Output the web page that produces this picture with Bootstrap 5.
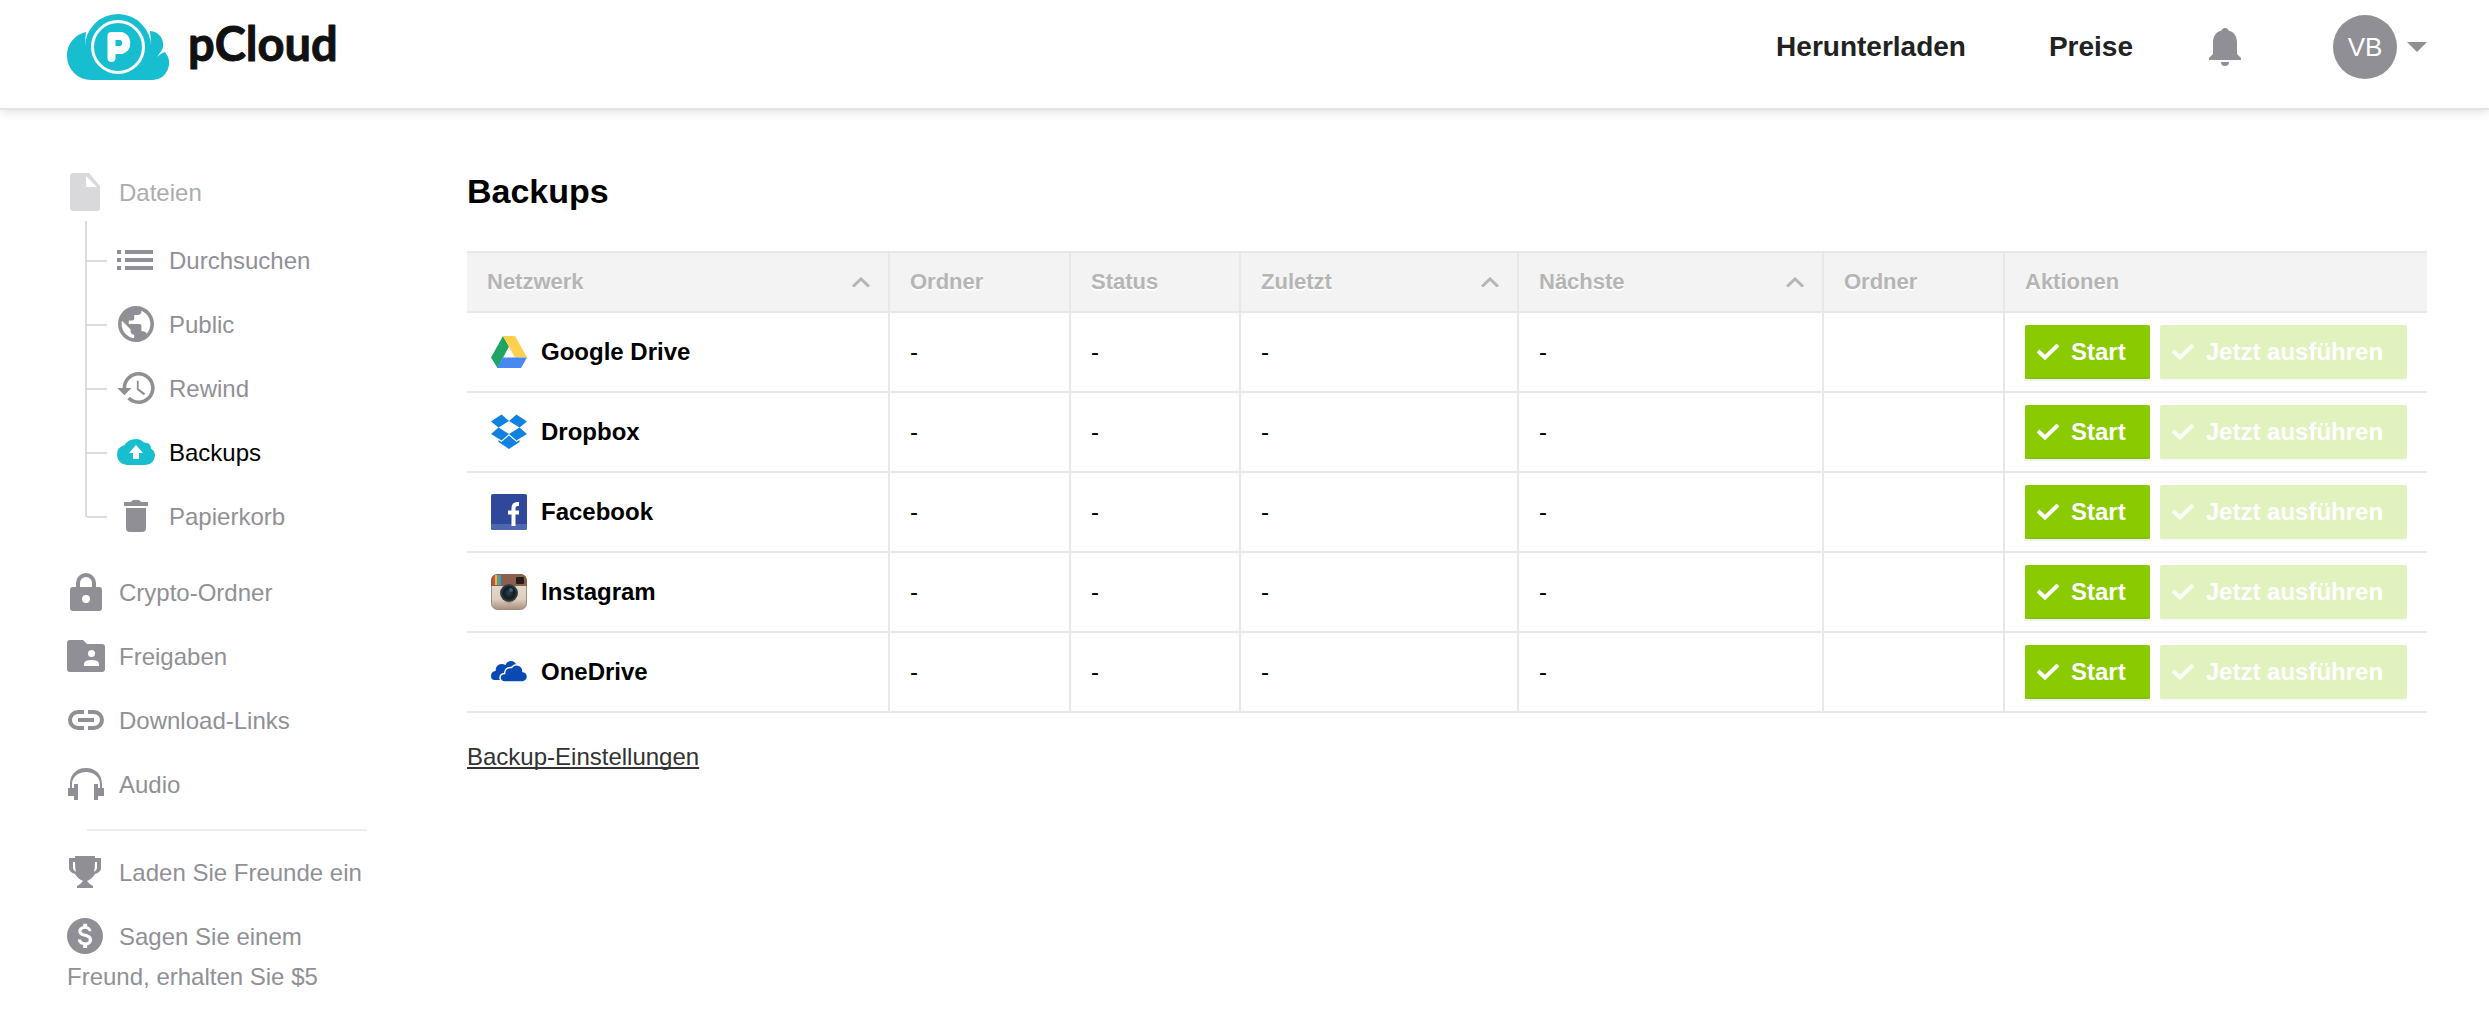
<!DOCTYPE html>
<html lang="de">
<head>
<meta charset="utf-8">
<meta name="viewport" content="width=device-width, initial-scale=1">
<title>pCloud – Backups</title>
<link href="https://cdn.jsdelivr.net/npm/bootstrap@5.3.0/dist/css/bootstrap.min.css" rel="stylesheet">
<style>
  body { font: 24px/40px "Liberation Sans", Arial, sans-serif; color: #000; background: #fff; }
  a { color: inherit; text-decoration: none; }
  svg { overflow: visible; flex: none; }

  /* top bar */
  .topbar { padding: 15px 62px 29px 67px; border-bottom: 2px solid #e4e4e4; box-shadow: 0 2px 10px rgba(0,0,0,.12); }
  .toplink { font-size: 28px; font-weight: 700; color: #222; }
  .toplink + .toplink { margin-left: 83px; }
  .iconbtn { border: 0; padding: 0; background: none; color: #8f8f95; }
  .bell { margin: 0 92px 0 76px; }
  .avatar { width: 64px; height: 64px; border-radius: 50%; background: #8f8f95; color: #fff; font-size: 26px; }
  .wordmark { font-family: Lato, sans-serif; font-size: 47px; font-weight: 700; fill: #111; stroke: #111; stroke-width: 1; stroke-linejoin: round; }

  /* side navigation */
  .sidebar { width: 300px; margin: 51px 100px 0 67px; color: #909096; }
  .navitem { display: block; padding: 12px 0; }
  .navitem svg { vertical-align: -11px; margin-right: 14px; fill: #8f8f95; }
  .navhead { padding-bottom: 8px; color: #acacb0; }
  .navhead svg { fill: #d9d9db; }
  .tree { position: relative; margin: 0 0 12px 20px; padding-top: 8px; }
  .tree::before { content: ""; position: absolute; left: -2px; top: 0; bottom: 32px; border-left: 2px solid #dcdcde; }
  .tree li::before { content: ""; width: 20px; height: 2px; margin-right: 10px; background: #dcdcde; }
  .tree .active { color: #000; }
  .tree .active svg { fill: #17bed0; }
  .sidebar hr { margin: 12px 0 10px 20px; border-top: 2px solid #eee; opacity: 1; }

  /* backups */
  .content { padding: 61px 62px 0 0; }
  .content h1 { font-size: 34px; line-height: 40px; font-weight: 700; margin-bottom: 40px; }
  .backups { table-layout: fixed; border-collapse: separate; border-spacing: 0; margin: 0; min-width: 1700px; }
  .backups > :not(caption) > * > * { padding: 0 18px 0 20px; border: 0 solid #e8e8e8; border-width: 0 2px 2px 0; box-shadow: none; vertical-align: middle; color: #000; }
  .backups > :not(caption) > * > :last-child { border-right-width: 0; }
  .backups > thead > tr > th { height: 62px; border-top-width: 2px; background: #f3f3f3; color: #b5b5b5; font-size: 22px; text-shadow: 0 2px 0 #fff; }
  .backups > tbody > tr > * { height: 80px; }
  .sortbtn { font-weight: 700; color: inherit; text-shadow: inherit; }
  .service { padding-left: 4px; gap: 14px; }
  .actions { gap: 10px; }
  .runbtn { padding: 7px 24px 7px 12px; border: 0; border-radius: 2px; font-size: 24px; line-height: 40px; font-weight: 700; color: #fff; background: #89cb00; box-shadow: inset 0 -2px #82c200, 0 2px #f0f0f0; }
  .runbtn:hover { background: #7fbd00; color: #fff; }
  .runbtn:disabled { opacity: 1; color: #fff; background: #e2f2bf; box-shadow: 0 2px #f9f9f9; }
  .runbtn svg { margin-right: 12px; fill: none; stroke: #fff; stroke-width: 4; }
  .runbtn:disabled svg { opacity: .85; }
  .settings { color: #333; text-decoration: underline; text-decoration-thickness: 2px; text-underline-offset: 2px; text-decoration-skip-ink: none; }
</style>
<script src="https://cdn.jsdelivr.net/npm/bootstrap@5.3.0/dist/js/bootstrap.bundle.min.js"></script>
</head>
<body>

<svg class="d-none" aria-hidden="true">
  <symbol id="tick" viewBox="0 0 22 16"><path d="M1 7l7 6.500L21 1"/></symbol>
  <symbol id="up" viewBox="0 0 18 10"><path d="M1 9.500l8-7.500 8 7.500" fill="none" stroke="#b5b5b5" stroke-width="3"/></symbol>
</svg>

<header class="topbar d-flex align-items-center">
  <a href="#" class="me-auto d-flex" aria-label="pCloud">
    <svg width="272" height="64" viewBox="0 1 272 64">
      <path fill="#17bed0" d="M24 66A24 24 0 0 1 0 42A24 24 0 0 1 19 18Q18 24 18.500 31L51 50L83.500 31Q84 24 83 17A13.500 13.500 0 0 1 95 36L90 43Q94 39 98 38A17 17 0 0 1 86 66Z"/>
      <circle cx="51" cy="33" r="33" fill="#17bed0"/>
      <circle cx="51" cy="33" r="25.500" fill="none" stroke="#fff" stroke-width="3"/>
      <path d="M44.500 44V22H54.500a7.500 7.500 0 0 1 0 14H46" fill="none" stroke="#fff" stroke-width="8" stroke-linecap="round" stroke-linejoin="round"/>
      <text class="wordmark" x="121" y="47">pCloud</text>
    </svg>
  </a>
  <a href="#" class="toplink">Herunterladen</a>
  <a href="#" class="toplink">Preise</a>
  <button type="button" class="iconbtn bell d-flex" aria-label="Benachrichtigungen">
    <svg width="32" height="38" viewBox="0 0 32 38" fill="currentColor"><path d="M0 32v-2l4-4V15C4 8 7 4 12.500 2.500Q13 0 16 0T19.500 2.500C25 4 28 8 28 15v11l4 4v2zM12 34h8a4 4 0 0 1-8 0z"/></svg>
  </button>
  <button type="button" class="iconbtn d-flex align-items-center" aria-label="Konto">
    <span class="avatar d-flex align-items-center justify-content-center">VB</span>
    <svg class="ms-2" width="22" height="10" viewBox="0 0 22 10" fill="currentColor"><path d="M2 0h20L12 10z"/></svg>
  </button>
</header>

<div class="d-flex">
  <nav class="sidebar flex-shrink-0">
    <a href="#" class="navitem navhead"><svg width="38" height="38"><path fill-rule="evenodd" d="M6-1h16l11 13v22q0 3-3 3H6q-3 0-3-3V2q0-3 3-3zm13 3v11h11z"/></svg>Dateien</a>
    <ul class="tree list-unstyled">
      <li class="d-flex align-items-center"><a href="#" class="navitem"><svg width="38" height="38"><path d="M0 8h4v4H0zM8 8h28v4H8zM0 16h4v4H0zM8 16h28v4H8zM0 24h4v4H0zM8 24h28v4H8z"/></svg>Durchsuchen</a></li>
      <li class="d-flex align-items-center"><a href="#" class="navitem"><svg width="38" height="38"><path transform="translate(-2.600 -3.600) scale(1.800)" d="M12 2C6.480 2 2 6.480 2 12s4.480 10 10 10 10-4.480 10-10S17.520 2 12 2zm-1 17.930c-3.950-.49-7-3.850-7-7.930 0-.62.08-1.210.21-1.790L9 15v1c0 1.100.9 2 2 2v1.930zm6.900-2.540c-.26-.81-1-1.390-1.900-1.390h-1v-3c0-.55-.45-1-1-1H8v-2h2c.55 0 1-.45 1-1V7h2c1.100 0 2-.9 2-2v-.41c2.930 1.190 5 4.060 5 7.410 0 2.080-.8 3.970-2.100 5.390z"/></svg>Public</a></li>
      <li class="d-flex align-items-center"><a href="#" class="navitem"><svg width="38" height="38"><path transform="translate(-1.500 -3.400) scale(1.780)" d="M13 3c-4.970 0-9 4.030-9 9H1l3.890 3.890.07.14L9 12H6c0-3.870 3.130-7 7-7s7 3.130 7 7-3.130 7-7 7c-1.930 0-3.680-.79-4.940-2.060l-1.420 1.420C8.270 19.990 10.510 21 13 21c4.970 0 9-4.030 9-9s-4.030-9-9-9zm-1 5v5l3.900 3.100.8-1L13 12.300V8z"/></svg>Rewind</a></li>
      <li class="d-flex align-items-center"><a href="#" class="navitem active" aria-current="page"><svg width="38" height="38"><path fill-rule="evenodd" d="M10 31A10 10 0 0 1 0 21Q0 13 7.500 11Q11 5 19 5q5 0 8 3.500 7 0 7 6 4 2.500 4 7A9.500 9.500 0 0 1 28.500 31zM16 25h6v-6h4l-7-8-7 8h4z"/></svg>Backups</a></li>
      <li class="d-flex align-items-center"><a href="#" class="navitem"><svg width="38" height="38"><path d="M7 4h7q1-2 3-2h4q2 0 3 2h7v4H7zM9 10h20v20q0 4-4 4H13q-4 0-4-4z"/></svg>Papierkorb</a></li>
    </ul>
    <a href="#" class="navitem"><svg width="38" height="38"><path fill-rule="evenodd" d="M6 13h3V9a10 10 0 0 1 20 0v4h3q3 0 3 3v18q0 3-3 3H6q-3 0-3-3V16q0-3 3-3zm7 0h12V9a6 6 0 0 0-12 0zm6 8a4 4 0 1 0 0 8 4 4 0 0 0 0-8z"/></svg>Crypto-Ordner</a>
    <a href="#" class="navitem"><svg width="38" height="38"><path fill-rule="evenodd" d="M3 2h13l4 4h15q3 0 3 3v22q0 3-3 3H3q-3 0-3-3V5q0-3 3-3zM24.500 12a3.500 3.500 0 1 0 0 7 3.500 3.500 0 0 0 0-7zM17 28h15v-2q0-4-7.500-4T17 26z"/></svg>Freigaben</a>
    <a href="#" class="navitem"><svg width="38" height="38"><path d="M17 8v4h-6a6 6 0 0 0 0 12h6v4h-6a10 10 0 0 1 0-20zM21 8v4h6a6 6 0 0 1 0 12h-6v4h6a10 10 0 0 0 0-20zM11 16h16v4H11z"/></svg>Download-Links</a>
    <a href="#" class="navitem"><svg width="38" height="38"><path d="M1 22h2v-4C3 8 10 2 19 2s16 6 16 16v4h2v8h-6v4h-4V18h4v4h2v-4C33 11 27 6 19 6S5 11 5 18v4h2v-4h4v16H7v-4H1z"/></svg>Audio</a>
    <hr>
    <a href="#" class="navitem"><svg width="38" height="38"><path fill-rule="evenodd" d="M2 4h6V2h20v2h6v10q0 4-6 6-3 5-8 7 2 3 6 5v2H10v-2q4-2 6-5-5-2-8-7-6-2-6-6zm4 4v6q0 2 3 4-1-4-1-10zm24 0h-2q0 6-1 10 3-2 3-4z"/></svg>Laden Sie Freunde ein</a>
    <a href="#" class="navitem"><svg width="38" height="38"><path transform="translate(-3.600 -3.600) scale(1.800)" d="M12 2C6.480 2 2 6.480 2 12s4.480 10 10 10 10-4.480 10-10S17.520 2 12 2zm1.200 15.200V18.600h-2.200v-1.500c-1.500-.3-2.900-1.300-3-3.100h1.900c.1 1 .7 1.500 2.200 1.500 1.600 0 2-.7 2-1.300 0-.7-.4-1.300-2.200-1.800-2-.5-3.600-1.300-3.600-3.100 0-1.500 1.200-2.500 2.700-2.800V5.200h2.200v1.400c1.500.4 2.300 1.500 2.400 2.800h-1.700c0-.9-.6-1.400-1.900-1.400-1.200 0-1.900.5-1.900 1.300 0 .7.600 1.100 2.200 1.500s3.600 1.200 3.600 3.300c0 1.800-1.200 2.800-2.700 3.100z"/></svg>Sagen Sie einem Freund, erhalten Sie $5</a>
  </nav>

  <main class="content flex-grow-1 overflow-hidden">
    <h1>Backups</h1>
    <div class="table-responsive">
      <table class="table backups">
        <colgroup><col><col style="width:181px"><col style="width:170px"><col style="width:278px"><col style="width:305px"><col style="width:181px"><col style="width:422px"></colgroup>
        <thead>
          <tr>
            <th scope="col"><button type="button" class="iconbtn sortbtn d-flex w-100 align-items-center justify-content-between">Netzwerk<svg width="18" height="10"><use href="#up"/></svg></button></th>
            <th scope="col">Ordner</th>
            <th scope="col">Status</th>
            <th scope="col"><button type="button" class="iconbtn sortbtn d-flex w-100 align-items-center justify-content-between">Zuletzt<svg width="18" height="10"><use href="#up"/></svg></button></th>
            <th scope="col"><button type="button" class="iconbtn sortbtn d-flex w-100 align-items-center justify-content-between">Nächste<svg width="18" height="10"><use href="#up"/></svg></button></th>
            <th scope="col">Ordner</th>
            <th scope="col">Aktionen</th>
          </tr>
        </thead>
        <tbody>
          <tr>
            <th scope="row"><div class="service d-flex align-items-center">
              <svg width="36" height="36"><path fill="#1fa463" d="M12 2l6 10.500L6.500 34 0 23.500z"/><path fill="#ffd04b" d="M12 2h12l12 21.500H24z"/><path fill="#4688f4" d="M12 23.500h24L30 34H6z"/></svg>Google Drive</div></th>
            <td>-</td><td>-</td><td>-</td><td>-</td><td></td>
            <td><div class="actions d-flex"><button type="button" class="btn runbtn d-flex align-items-center"><svg width="22" height="16"><use href="#tick"/></svg>Start</button><button type="button" class="btn runbtn d-flex align-items-center" disabled><svg width="22" height="16"><use href="#tick"/></svg>Jetzt ausführen</button></div></td>
          </tr>
          <tr>
            <th scope="row"><div class="service d-flex align-items-center">
              <svg width="36" height="36" fill="#1081de"><path d="M10.500.5L18 7 7.500 13.500 0 7.500zM25.500.5L36 7.500l-7.500 6L18 7zM7.500 13.500L18 20l-7.500 6.500L0 20zM28.500 13.500L36 20l-10.500 6.500L18 20zM18 21.500l7.500 6.500 3-2v2L18 35 7.500 28v-2l3 2z"/></svg>Dropbox</div></th>
            <td>-</td><td>-</td><td>-</td><td>-</td><td></td>
            <td><div class="actions d-flex"><button type="button" class="btn runbtn d-flex align-items-center"><svg width="22" height="16"><use href="#tick"/></svg>Start</button><button type="button" class="btn runbtn d-flex align-items-center" disabled><svg width="22" height="16"><use href="#tick"/></svg>Jetzt ausführen</button></div></td>
          </tr>
          <tr>
            <th scope="row"><div class="service d-flex align-items-center">
              <svg width="36" height="36"><rect width="36" height="36" rx="2" fill="#30489b"/><path fill="#5067b0" d="M0 30h36v4q0 2-2 2H2q-2 0-2-2z"/><path d="M28 10h-1.500q-4 0-4 4v18M17 18.500h11" fill="none" stroke="#fff" stroke-width="4"/></svg>Facebook</div></th>
            <td>-</td><td>-</td><td>-</td><td>-</td><td></td>
            <td><div class="actions d-flex"><button type="button" class="btn runbtn d-flex align-items-center"><svg width="22" height="16"><use href="#tick"/></svg>Start</button><button type="button" class="btn runbtn d-flex align-items-center" disabled><svg width="22" height="16"><use href="#tick"/></svg>Jetzt ausführen</button></div></td>
          </tr>
          <tr>
            <th scope="row"><div class="service d-flex align-items-center">
              <svg width="36" height="36">
                <defs>
                  <linearGradient id="shell" x2="0" y2="1"><stop offset="0" stop-color="#e9ded2"/><stop offset=".7" stop-color="#ddcfc0"/><stop offset="1" stop-color="#a98f7d"/></linearGradient>
                  <radialGradient id="lens"><stop offset="0" stop-color="#2c4354"/><stop offset=".6" stop-color="#121a20"/><stop offset="1" stop-color="#3b4a50"/></radialGradient>
                </defs>
                <rect x=".5" y=".5" width="35" height="35" rx="6" fill="url(#shell)" stroke="#a58d7c"/>
                <path fill="#8a5f4e" d="M0 12V7q0-6 6-7h24q6 1 6 7v5z"/>
                <path fill="#d94b3d" d="M2 2h2v9H2z"/><path fill="#e8b93c" d="M4 1h2v10H4z"/><path fill="#5aa469" d="M6 1h2v10H6z"/><path fill="#4a94cf" d="M8 1h2v10H8z"/>
                <rect x="25" y="3" width="8" height="7" rx="1" fill="#241b1b"/>
                <path fill="#b9a595" d="M9 17h18q0 8-9 14-9-6-9-14z"/>
                <circle cx="18" cy="19" r="9" fill="url(#lens)"/><circle cx="20" cy="16" r="2" fill="#3e6072"/>
              </svg>Instagram</div></th>
            <td>-</td><td>-</td><td>-</td><td>-</td><td></td>
            <td><div class="actions d-flex"><button type="button" class="btn runbtn d-flex align-items-center"><svg width="22" height="16"><use href="#tick"/></svg>Start</button><button type="button" class="btn runbtn d-flex align-items-center" disabled><svg width="22" height="16"><use href="#tick"/></svg>Jetzt ausführen</button></div></td>
          </tr>
          <tr>
            <th scope="row"><div class="service d-flex align-items-center">
              <svg width="36" height="36" fill="#094ab2"><path d="M0 22Q0 17.500 4.500 17q0-6 5.500-7 3 0 4.500 1 1.500-4 5.500-4t6 5l2 6-17 8H3q-3-.5-3-4z"/><path stroke="#fff" stroke-width="1.500" d="M13 28q-4-1-4-4.500t4.500-4q.5-6.500 7-6 3-3.500 6.500-2.500 5 1 5 6.500 4.500 1 4.500 5t-4.500 5.500z"/></svg>OneDrive</div></th>
            <td>-</td><td>-</td><td>-</td><td>-</td><td></td>
            <td><div class="actions d-flex"><button type="button" class="btn runbtn d-flex align-items-center"><svg width="22" height="16"><use href="#tick"/></svg>Start</button><button type="button" class="btn runbtn d-flex align-items-center" disabled><svg width="22" height="16"><use href="#tick"/></svg>Jetzt ausführen</button></div></td>
          </tr>
        </tbody>
      </table>
    </div>
    <div class="mt-4"><a href="#" class="settings">Backup-Einstellungen</a></div>
  </main>
</div>
</body>
</html>
